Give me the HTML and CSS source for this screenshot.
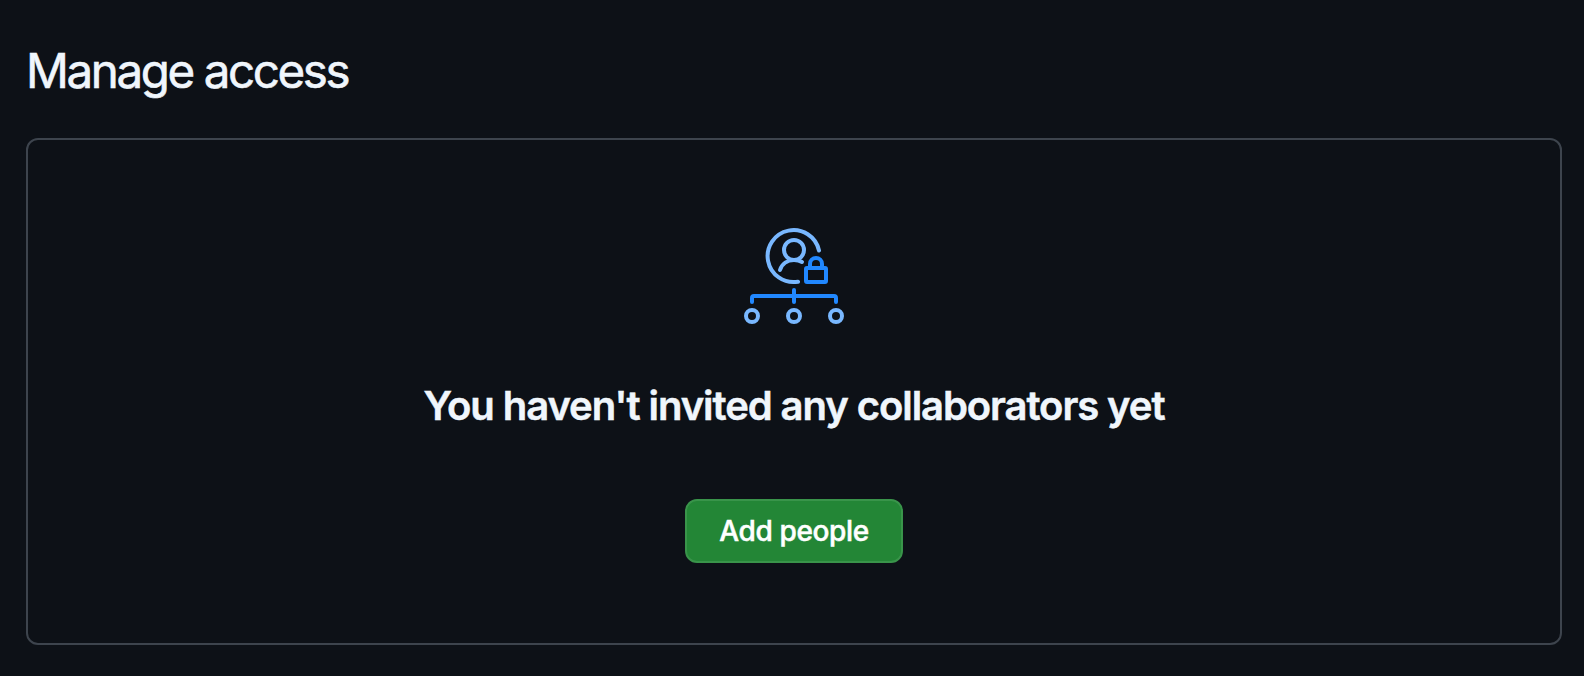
FILE: index.html
```html
<!DOCTYPE html>
<html lang="en">
<head>
<meta charset="utf-8">
<title>Manage access</title>
<link rel="stylesheet" href="styles.css">
</head>
<body>
<main class="page">
  <h2 class="title">Manage access</h2>
  <section class="blankslate">
    <svg class="icon" width="120" height="115" viewBox="0 0 120 115" fill="none" stroke-width="4" stroke-linecap="round" stroke-linejoin="round" aria-hidden="true">
      <g stroke="#79b8ff">
        <path d="M85 32.5A26 26 0 1 0 64 63.7"/>
        <circle cx="60" cy="32" r="10"/>
        <path d="M46 52C48 45.5 53.5 42 60 42C63 42 66 42.800 68 44"/>
        <circle cx="18" cy="98" r="6"/>
        <circle cx="60" cy="98" r="6"/>
        <circle cx="102" cy="98" r="6"/>
      </g>
      <g stroke="#2188ff">
        <rect x="72" y="50" width="20" height="14" rx="1"/>
        <path d="M76 50V46A6 6 0 0 1 88 46V50"/>
        <path d="M18 84V80A2 2 0 0 1 20 78H100A2 2 0 0 1 102 80V84M60 72V84"/>
      </g>
    </svg>
    <h3 class="heading">You haven't invited any collaborators yet</h3>
    <button class="button" type="button">Add people</button>
  </section>
</main>
</body>
</html>
```
FILE: styles.css
```css
* { box-sizing: border-box; }
body {
  margin: 0;
  background: #0d1117;
  color: #f0f6fc;
  font-family: Inter, "Liberation Sans", sans-serif;
}
.page {
  height: 676px;
  padding: 35px 22px 0 26px;
}
.title {
  margin: 0 0 31px;
  font-size: 47.5px;
  line-height: 72px;
  font-weight: 400;
  letter-spacing: -2.4px;
  -webkit-text-stroke: 0.6px #f0f6fc;
}
.blankslate {
  display: flex;
  flex-direction: column;
  align-items: center;
  height: 507px;
  padding-top: 78px;
  border: 2px solid #3d444d;
  border-radius: 12px;
}
.icon { display: block; }
.heading {
  margin: 43px 0 0;
  font-size: 40px;
  line-height: 60px;
  font-weight: 600;
  letter-spacing: -1.07px;
  -webkit-text-stroke: 0.5px #f0f6fc;
  white-space: nowrap;
}
.button {
  width: 218px;
  height: 64px;
  margin-top: 63px;
  padding: 0;
  border: 2px solid #39944a;
  border-radius: 12px;
  background: #238636;
  color: #fff;
  font: 500 28px/40px Inter, "Liberation Sans", sans-serif;
  letter-spacing: -0.35px;
  -webkit-text-stroke: 0.5px #fff;
  white-space: nowrap;
}
```
